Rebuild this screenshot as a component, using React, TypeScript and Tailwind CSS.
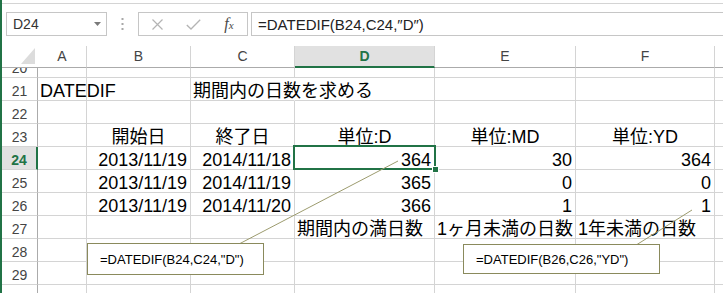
import React from "react";

type Align = "l" | "r" | "c";
type C = { t?: string; a?: Align; noR?: boolean };

const colW = ["w-[49px]", "w-[104px]", "w-[104px]", "w-[140px]", "w-[141px]", "w-[139px]"];

type Row = { n: number; h: string; cells: (C | undefined)[]; sel?: boolean; clip?: boolean };

const rows: Row[] = [
  { n: 20, h: "h-[10px]", cells: [], clip: true },
  {
    n: 21,
    h: "h-[23px]",
    cells: [{ t: "DATEDIF", a: "l" }, undefined, { t: "期間内の日数を求める", a: "l", noR: true }],
  },
  { n: 22, h: "h-[23px]", cells: [] },
  {
    n: 23,
    h: "h-[23px]",
    cells: [
      undefined,
      { t: "開始日", a: "c" },
      { t: "終了日", a: "c" },
      { t: "単位:D", a: "c" },
      { t: "単位:MD", a: "c" },
      { t: "単位:YD", a: "c" },
    ],
  },
  {
    n: 24,
    h: "h-[23px]",
    sel: true,
    cells: [
      undefined,
      { t: "2013/11/19", a: "r" },
      { t: "2014/11/18", a: "r" },
      { t: "364", a: "r" },
      { t: "30", a: "r" },
      { t: "364", a: "r" },
    ],
  },
  {
    n: 25,
    h: "h-[23px]",
    cells: [
      undefined,
      { t: "2013/11/19", a: "r" },
      { t: "2014/11/19", a: "r" },
      { t: "365", a: "r" },
      { t: "0", a: "r" },
      { t: "0", a: "r" },
    ],
  },
  {
    n: 26,
    h: "h-[23px]",
    cells: [
      undefined,
      { t: "2013/11/19", a: "r" },
      { t: "2014/11/20", a: "r" },
      { t: "366", a: "r" },
      { t: "1", a: "r" },
      { t: "1", a: "r" },
    ],
  },
  {
    n: 27,
    h: "h-[23px]",
    cells: [
      undefined,
      undefined,
      undefined,
      { t: "期間内の満日数", a: "l" },
      { t: "1ヶ月未満の日数", a: "l" },
      { t: "1年未満の日数", a: "l" },
    ],
  },
  { n: 28, h: "h-[23px]", cells: [] },
  { n: 29, h: "h-[23px]", cells: [] },
  { n: 30, h: "h-[23px]", cells: [] },
];

function Cell({ w, c }: { w: string; c?: C }) {
  const align =
    c?.a === "r" ? "justify-end pr-[3px]" : c?.a === "c" ? "justify-center" : "justify-start pl-[2px]";
  const br = c?.noR ? "border-r-transparent" : "border-r-[#d4d4d4]";
  return (
    <div className={`${w} shrink-0 h-full flex items-end whitespace-nowrap border-r border-b border-b-[#d4d4d4] ${br} ${align}`}>
      {c?.t ? <span className="text-[18px] leading-none text-black">{c.t}</span> : null}
    </div>
  );
}

function FormulaBar() {
  return (
    <div className="h-[46px] flex flex-col">
      <div className="h-[3px]" />
      <div className="h-[9px] border-t border-[#d4d4d4]" />
      <div className="flex h-[24px]">
        <div className="ml-[4px] w-[101px] border border-[#c6c6c6] flex items-center justify-between pl-[6px] pr-[5px]">
          <span className="text-[14px] leading-none text-[#333]">D24</span>
          <svg width="7" height="4" viewBox="0 0 7 4">
            <polygon points="0,0 7,0 3.5,4" fill="#7a7a7a" />
          </svg>
        </div>
        <div className="w-[31px] flex items-center justify-center">
          <svg width="3" height="12" viewBox="0 0 3 12">
            <rect x="0.5" y="0" width="2" height="2" fill="#a8a8a8" />
            <rect x="0.5" y="5" width="2" height="2" fill="#a8a8a8" />
            <rect x="0.5" y="10" width="2" height="2" fill="#a8a8a8" />
          </svg>
        </div>
        <div className="w-[110px] border border-[#c6c6c6] flex items-center">
          <div className="w-[36px] flex items-center justify-center">
            <svg width="11" height="11" viewBox="0 0 11 11">
              <path d="M0.5 0.5 L10.5 10.5 M10.5 0.5 L0.5 10.5" stroke="#b4b4b4" strokeWidth="1.2" fill="none" />
            </svg>
          </div>
          <div className="w-[36px] flex items-center justify-center">
            <svg width="15" height="11" viewBox="0 0 15 11">
              <path d="M0.8 6 L5 10 L14.2 0.8" stroke="#b4b4b4" strokeWidth="1.3" fill="none" />
            </svg>
          </div>
          <div className="w-[36px] flex items-center justify-center">
            <span className="font-['Liberation_Serif',serif] italic text-[#4a4a4a] leading-none">
              <span className="text-[16px]">f</span>
              <span className="text-[11px]">x</span>
            </span>
          </div>
        </div>
        <div className="ml-[3px] flex-1 border border-r-0 border-[#c6c6c6] pl-[6px] flex items-center">
          <span className="text-[15px] leading-none text-[#222] whitespace-nowrap">=DATEDIF(B24,C24,″D″)</span>
        </div>
      </div>
      <div className="h-[10px]" />
    </div>
  );
}

function HeaderRow() {
  const letters = ["A", "B", "C", "D", "E", "F"];
  return (
    <div className="flex h-[22px]">
      <div className="w-[36px] shrink-0 h-full border-b border-[#ababab] flex items-end justify-end pr-[3px] pb-[3px]">
        <svg width="14" height="16" viewBox="0 0 14 16">
          <polygon points="14,0 14,16 0,16" fill="#dcdcdc" />
        </svg>
      </div>
      {letters.map((l, i) =>
        l === "D" ? (
          <div
            key={l}
            className={`${colW[i]} shrink-0 h-full bg-[#e1e1e1] border-r border-r-[#d4d4d4] border-b-2 border-b-[#217346] flex items-center justify-center pb-[1px]`}
          >
            <span className="text-[14px] leading-none font-bold text-[#217346]">{l}</span>
          </div>
        ) : (
          <div
            key={l}
            className={`${colW[i]} shrink-0 h-full border-r border-r-[#d4d4d4] border-b border-b-[#ababab] flex items-center justify-center pb-[2px]`}
          >
            <span className="text-[14px] leading-none text-[#444]">{l}</span>
          </div>
        )
      )}
      <div className="flex-1 h-full border-b border-[#ababab]" />
    </div>
  );
}

export default function App() {
  return (
    <div className="relative w-[723px] h-[293px] overflow-hidden bg-white border-l-2 border-[#217346] font-['Liberation_Sans','Noto_Sans_CJK_JP',sans-serif]">
      <FormulaBar />
      <HeaderRow />
      {rows.map((r) => (
        <div key={r.n} className={`flex ${r.h} shrink-0 ${r.clip ? "overflow-hidden" : ""}`}>
          {r.sel ? (
            <div className="w-[36px] shrink-0 h-full bg-[#e1e1e1] border-r-2 border-r-[#217346] border-b border-b-[#d4d4d4] flex items-end justify-center pb-[2px]">
              <span className="text-[14px] leading-none font-bold text-[#217346]">{r.n}</span>
            </div>
          ) : (
            <div className="w-[36px] shrink-0 h-full border-r border-r-[#ababab] border-b border-b-[#d4d4d4] flex items-end justify-center pb-[2px]">
              <span className="text-[14px] leading-none text-[#444]">{r.n}</span>
            </div>
          )}
          {colW.map((w, i) => (
            <Cell key={i} w={w} c={r.cells[i]} />
          ))}
          <div className="flex-1 h-full border-b border-[#d4d4d4]" />
        </div>
      ))}

      {/* selection */}
      <div className="absolute left-[291px] top-[145px] w-[143px] h-[25px] border-2 border-[#217346]" />
      <div className="absolute left-[430px] top-[166px] w-[7px] h-[7px] bg-[#217346] border border-white" />

      {/* callout leader lines */}
      <svg className="absolute left-[-2px] top-0" width="723" height="293" viewBox="0 0 723 293">
        <line x1="240" y1="243.5" x2="398" y2="161" stroke="#9c9b6e" strokeWidth="1" />
        <line x1="637" y1="244.5" x2="692" y2="210" stroke="#9c9b6e" strokeWidth="1" />
      </svg>

      {/* callouts */}
      <div className="absolute left-[85px] top-[243px] w-[177px] h-[32px] bg-white border border-[#8a8a5c] flex items-center pl-[12px]">
        <span className="text-[13px] leading-none text-black whitespace-nowrap">=DATEDIF(B24,C24,"D")</span>
      </div>
      <div className="absolute left-[461px] top-[244px] w-[197px] h-[30px] bg-white border border-[#8a8a5c] flex items-center pl-[12px]">
        <span className="text-[13px] leading-none text-black whitespace-nowrap">=DATEDIF(B26,C26,"YD")</span>
      </div>
    </div>
  );
}
